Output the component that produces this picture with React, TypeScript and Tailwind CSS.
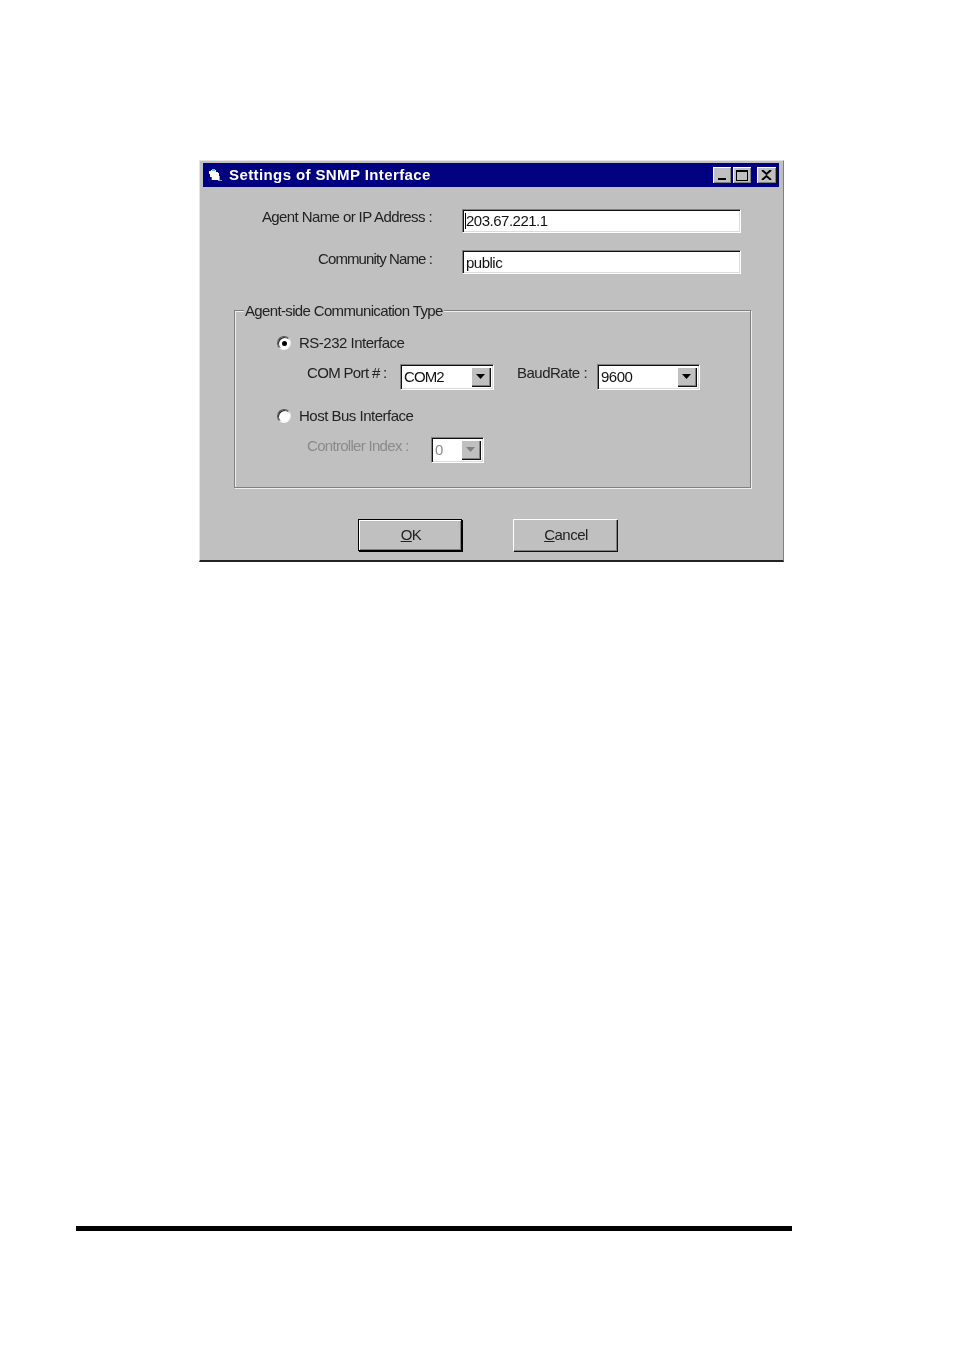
const sunken = "border border-t-[#808080] border-l-[#808080] border-r-white border-b-white shadow-[inset_1px_1px_0_#111,inset_-1px_-1px_0_#dcdcdc]";
const raised = "bg-[#c0c0c0] shadow-[inset_1px_1px_0_#fff,inset_-1px_-1px_0_#808080,1px_1px_0_#111]";

function Arrow({ color = "#000" }: { color?: string }) {
  return (
    <svg width="9" height="5" viewBox="0 0 9 5" aria-hidden="true">
      <path d="M0 0h9L4.5 5z" fill={color} />
    </svg>
  );
}

function Combo({ value, width, tracking, disabled = false }: { value: string; width: string; tracking: string; disabled?: boolean }) {
  return (
    <div className={`${width} h-[26px] ${sunken} bg-white flex items-stretch p-[2px] shrink-0`}>
      <span className={`flex-1 pl-[1px] pb-[2px] flex items-center text-[15px] leading-none ${tracking} ${disabled ? "text-[#8a8a8a]" : "text-[#111]"}`}>{value}</span>
      <span className={`w-[19px] flex items-center justify-center ${raised} mr-[1px] mb-[1px]`}>
        <Arrow color={disabled ? "#808080" : "#000"} />
      </span>
    </div>
  );
}

function TextBox({ value, mt, caret = false }: { value: string; mt: string; caret?: boolean }) {
  return (
    <div className={`w-[279px] h-[24px] ${mt} ${sunken} bg-white flex items-center pl-[3px] text-[15px] tracking-[-0.5px] leading-none text-[#111]`}>
      {caret && <span className="w-px h-[16px] bg-black -ml-[1px] shrink-0" />}
      <span className={caret ? "-mt-[1px]" : ""}>{value}</span>
    </div>
  );
}

function Radio({ checked }: { checked?: boolean }) {
  return (
    <span className="w-[14px] h-[14px] rounded-full bg-white shrink-0 flex items-center justify-center border border-t-[#555] border-l-[#555] border-r-[#e8e8e8] border-b-[#f4f4f4] shadow-[inset_1px_1px_0_#222]">
      {checked && <span className="w-[5px] h-[5px] rounded-full bg-black" />}
    </span>
  );
}

function CapButton({ children, className }: { children: React.ReactNode; className: string }) {
  return (
    <span className={`h-[16px] ${className} flex items-center justify-center ${raised}`}>{children}</span>
  );
}

export default function App() {
  return (
    <div className="w-[954px] h-[1352px] bg-white overflow-hidden font-['Liberation_Sans',Arial,sans-serif]">
      <div className="ml-[199px] pt-[160px]">
        <div className="w-[585px] h-[402px] blur-[0.35px] bg-[#c0c0c0] border-t border-l border-t-[#e4e4e4] border-l-[#e4e4e4] border-r border-r-[#808080] border-b-2 border-b-[#222] px-[3px] pt-[2px]">
          <div className="h-[24px] w-[576px] bg-[#000080] flex items-center text-white pl-[6px] pr-[3px]">
            <svg width="13" height="14" viewBox="0 0 13 14" aria-hidden="true" className="shrink-0">
              <path d="M0 3h2V2h5v2h2v1h1v7H2V9H1V6H0z" fill="#fff" />
              <path d="M3 1h3v2H3z" fill="#4fd0e0" />
              <path d="M10 8h1v4h2v1H9v-1h1z" fill="#9a9ab8" />
              <path d="M2 9h1v3H2z" fill="#555" />
            </svg>
            <span className="ml-[7px] -mt-[2px] text-[15px] font-bold tracking-[0.4px] leading-none whitespace-nowrap">Settings of SNMP Interface</span>
            <span className="ml-auto flex items-center">
              <CapButton className="w-[18px]">
                <span className="w-[8px] h-[2px] bg-black mt-[7px]" />
              </CapButton>
              <CapButton className="w-[18px] ml-[2px]">
                <span className="w-[12px] h-[11px] border border-black border-t-2" />
              </CapButton>
              <CapButton className="w-[19px] ml-[6px]">
                <svg width="11" height="10" viewBox="0 0 11 10" aria-hidden="true">
                  <path d="M1 0l4.500 4 4.500-4M1 10l4.500-4 4.500 4" stroke="#000" strokeWidth="2" fill="none" />
                </svg>
              </CapButton>
            </span>
          </div>

          <div className="flex mt-[22px] text-[15px] text-[#222]">
            <div className="w-[229px] text-right leading-[18px]">
              <div className="-mt-[1px] tracking-[-0.6px]">Agent Name or IP Address :</div>
              <div className="mt-[24px] tracking-[-0.9px]">Community Name :</div>
            </div>
            <div className="ml-[30px]">
              <TextBox value="203.67.221.1" mt="mt-0" caret />
              <TextBox value="public" mt="mt-[17px]" />
            </div>
          </div>

          <div className="relative w-[517px] h-[178px] ml-[31px] mt-[36px] border border-[#808080] shadow-[inset_1px_1px_0_#eee,1px_1px_0_#eee] pl-[42px] text-[15px] text-[#222]">
            <span className="absolute -top-[9px] left-[9px] px-[1px] bg-[#c0c0c0] leading-[18px] tracking-[-0.65px] whitespace-nowrap">Agent-side Communication Type</span>

            <div className="flex items-center gap-[8px] mt-[23px] h-[18px]">
              <Radio checked />
              <span className="tracking-[-0.5px]">RS-232 Interface</span>
            </div>
            <div className="flex items-center mt-[12px] ml-[30px] h-[26px]">
              <span className="w-[93px] -mt-[8px] tracking-[-0.66px] whitespace-nowrap">COM Port # :</span>
              <Combo value="COM2" width="w-[94px]" tracking="tracking-[-0.9px]" />
              <span className="ml-[23px] w-[80px] -mt-[8px] tracking-[-0.5px] whitespace-nowrap">BaudRate :</span>
              <Combo value="9600" width="w-[103px]" tracking="tracking-[-0.5px]" />
            </div>
            <div className="flex items-center gap-[8px] mt-[17px] h-[18px]">
              <Radio />
              <span className="tracking-[-0.5px]">Host Bus Interface</span>
            </div>
            <div className="flex items-center mt-[12px] ml-[30px] h-[26px]">
              <span className="w-[124px] -mt-[8px] text-[#8a8a8a] tracking-[-0.7px] whitespace-nowrap">Controller Index :</span>
              <Combo value="0" width="w-[53px]" tracking="tracking-normal" disabled />
            </div>
          </div>

          <div className="flex mt-[31px] ml-[155px] text-[15px] text-[#222]">
            <button className="w-[104px] h-[32px] pl-[2px] tracking-[-0.5px] bg-[#c0c0c0] border border-black shadow-[inset_1px_1px_0_#fff,inset_-1px_-1px_0_#808080,1px_1px_0_#000]">
              <span className="underline">O</span>K
            </button>
            <button className={`w-[104px] h-[32px] ml-[51px] pl-[2px] tracking-[-0.5px] ${raised}`}>
              <span className="underline">C</span>ancel
            </button>
          </div>
        </div>
      </div>
      <div className="w-[716px] h-[5px] ml-[76px] mt-[664px] bg-black" />
    </div>
  );
}
